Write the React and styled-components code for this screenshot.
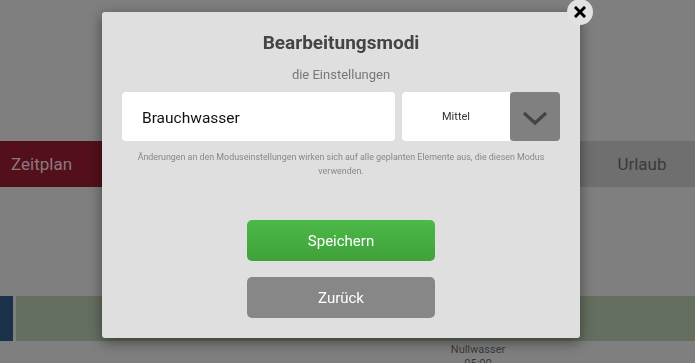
import styled, { createGlobalStyle } from 'styled-components';

const GlobalStyle = createGlobalStyle`
  html, body {
    margin: 0;
    padding: 0;
    background: #7f7f7f;
    font-family: Roboto, "Liberation Sans", sans-serif;
    overflow: hidden;
  }
`;

const Page = styled.div`
  width: 695px;
  height: 363px;
  padding-top: 141px;
  box-sizing: border-box;
  background: #7f7f7f;
`;

const TabRow = styled.div`
  display: flex;
  height: 46px;
`;

const Tab = styled.div`
  display: flex;
  align-items: center;
  justify-content: ${p => (p.$left ? 'flex-start' : 'center')};
  width: ${p => p.$width}px;
  padding-left: ${p => p.$pad || 0}px;
  box-sizing: border-box;
  background: ${p => p.$bg};
  color: ${p => p.$color};
  font-size: 17px;
`;

const Spacer = styled.div`
  flex: 1;
`;

const StatusRow = styled.div`
  display: flex;
  gap: 3px;
  height: 45px;
  margin-top: 109px;
`;

const Block = styled.div`
  width: ${p => (p.$width ? `${p.$width}px` : 'auto')};
  flex: ${p => (p.$width ? 'none' : 1)};
  background: ${p => p.$bg};
`;

const Caption = styled.div`
  width: 100px;
  margin: 2px 0 0 428px;
  text-align: center;
  font-size: 11px;
  line-height: 14px;
  color: #3a3a3a;
`;

const Overlay = styled.div`
  position: fixed;
  inset: 0;
  padding: 12px 0 0 102px;
`;

const Modal = styled.div`
  position: relative;
  width: 478px;
  height: 326px;
  box-sizing: border-box;
  padding: 20px 20px;
  background: #dfdfdf;
  border-radius: 3px;
  box-shadow: 0 4px 14px rgba(0, 0, 0, 0.45);
  display: flex;
  flex-direction: column;
  align-items: center;
`;

const CloseButton = styled.button`
  position: absolute;
  top: -13px;
  right: -13px;
  width: 26px;
  height: 26px;
  border: none;
  border-radius: 50%;
  padding: 0;
  background: #e2e2e2;
  display: flex;
  align-items: center;
  justify-content: center;
`;

const Title = styled.h2`
  margin: 0;
  font-size: 19px;
  line-height: 22px;
  font-weight: 700;
  color: #444;
`;

const Subtitle = styled.div`
  margin-top: 13px;
  font-size: 13px;
  line-height: 16px;
  color: #777;
`;

const FieldRow = styled.div`
  display: flex;
  width: 100%;
  height: 49px;
  margin-top: 9px;
`;

const TextField = styled.div`
  width: 273px;
  display: flex;
  align-items: center;
  padding: 2px 0 0 20px;
  box-sizing: border-box;
  background: #fff;
  border-radius: 4px;
  font-size: 15.5px;
  color: #111;
`;

const Select = styled.div`
  display: flex;
  margin-left: 7px;
  flex: 1;
`;

const SelectValue = styled.div`
  flex: 1;
  display: flex;
  align-items: center;
  justify-content: center;
  background: #fff;
  border-radius: 4px 0 0 4px;
  font-size: 11px;
  color: #333;
`;

const SelectToggle = styled.div`
  width: 50px;
  display: flex;
  align-items: center;
  justify-content: center;
  padding-top: 2px;
  box-sizing: border-box;
  background: #808080;
  border-radius: 4px;
`;

const Note = styled.p`
  margin: 9px 0 0;
  padding: 0;
  text-align: center;
  font-size: 8.9px;
  line-height: 14px;
  color: #888;
`;

const Button = styled.button`
  width: 188px;
  height: 41px;
  margin-top: ${p => p.$gap}px;
  border: none;
  border-radius: 5px;
  background: ${p => p.$bg};
  color: #fff;
  font-family: inherit;
  font-size: 15px;
`;

export default function App() {
  return (
    <>
      <GlobalStyle />
      <Page>
        <TabRow>
          <Tab $left $width={170} $pad={11} $bg="#53101a" $color="#8a7a7e">
            Zeitplan
          </Tab>
          <Spacer />
          <Tab $width={130} $pad={24} $bg="#6f6f6f" $color="#3a3a3a">
            Urlaub
          </Tab>
        </TabRow>
        <StatusRow>
          <Block $width={13} $bg="#1a3249" />
          <Block $bg="#656f5f" />
        </StatusRow>
        <Caption>
          Nullwasser
          <br />
          05:00
        </Caption>
      </Page>
      <Overlay>
        <Modal>
          <CloseButton>
            <svg width="12" height="12" viewBox="0 0 12 12">
              <path d="M2 2 L10 10 M10 2 L2 10" stroke="#000" strokeWidth="3" strokeLinecap="square" />
            </svg>
          </CloseButton>
          <Title>Bearbeitungsmodi</Title>
          <Subtitle>die Einstellungen</Subtitle>
          <FieldRow>
            <TextField>Brauchwasser</TextField>
            <Select>
              <SelectValue>Mittel</SelectValue>
              <SelectToggle>
                <svg width="28" height="16" viewBox="0 0 28 16">
                  <path d="M3 3 L14 13 L25 3" fill="none" stroke="#444" strokeWidth="3.2" />
                </svg>
              </SelectToggle>
            </Select>
          </FieldRow>
          <Note>
            Änderungen an den Moduseinstellungen wirken sich auf alle geplanten Elemente aus, die diesen Modus verwenden.
          </Note>
          <Button $gap={42} $bg="linear-gradient(#4cb948, #3fa13a)">Speichern</Button>
          <Button $gap={16} $bg="#878787">Zurück</Button>
        </Modal>
      </Overlay>
    </>
  );
}
